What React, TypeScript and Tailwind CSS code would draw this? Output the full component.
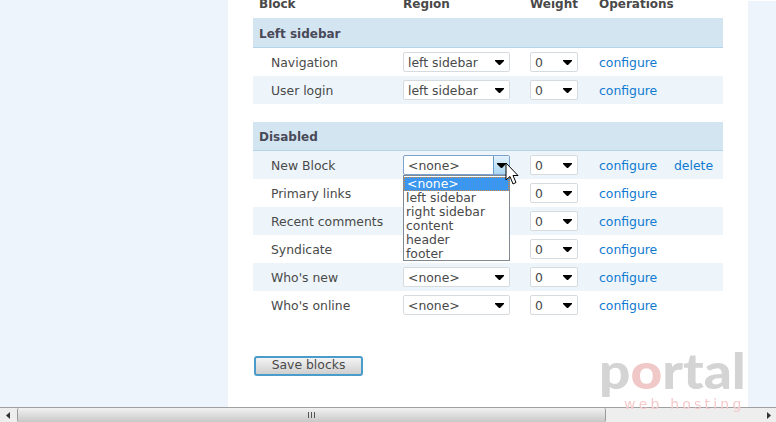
import React from "react";

const font = { fontFamily: '"DejaVu Sans", Verdana, sans-serif' };

function Arrow({ className = "" }: { className?: string }) {
  return (
    <svg width="9" height="5" viewBox="0 0 9 5" className={className}>
      <path d="M0 0H9V1L5 5H4L0 1Z" fill="#000" />
    </svg>
  );
}

function Select({ value, w, active }: { value: string; w: string; active?: boolean }) {
  return (
    <div
      className={`${w} h-[20px] relative flex items-center justify-between rounded-[2px] bg-white border pl-[4px] pr-[5px] text-[12.4px] text-[#494949] ${
        active ? "border-[#7da2ce]" : "border-[#d6dbe0]"
      }`}
    >
      <span className="leading-none pt-[2px]">{value}</span>
      {active ? (
        <span className="absolute right-0 top-0 h-[18px] w-[16px] flex items-center justify-center border-l border-[#6a9cc9] bg-gradient-to-b from-[#e3f1fb] to-[#a9d6f3]">
          <Arrow />
        </span>
      ) : (
        <Arrow />
      )}
    </div>
  );
}

function Row({
  name,
  region,
  alt,
  del,
  active,
}: {
  name: string;
  region: string;
  alt?: boolean;
  del?: boolean;
  active?: boolean;
}) {
  return (
    <div className={`h-[28px] flex items-center text-[12.4px] ${alt ? "bg-[#edf5fb]" : "bg-white"}`}>
      <div className="w-[150px] pl-[18px] pt-[2px] text-[#494949]">{name}</div>
      <Select value={region} w="w-[107px]" active={active} />
      <div className="w-[20px]" />
      <Select value="0" w="w-[48px]" />
      <div className="w-[21px]" />
      <a className="w-[75px] pt-[2px] text-[#0f7ad0]">configure</a>
      {del && <a className="pt-[2px] text-[#0f7ad0]">delete</a>}
    </div>
  );
}

function Section({ title, h }: { title: string; h: string }) {
  return (
    <div className={`${h} flex items-center pl-[6px] pt-[2px] bg-[#d4e5f2] border-b border-[#b5d3e9] text-[12px] font-bold text-[#494958]`}>
      {title}
    </div>
  );
}

export default function App() {
  return (
    <div className="w-[776px] h-[422px] flex flex-col overflow-hidden bg-white" style={font}>
      <div className="flex-1 flex min-h-0">
        <div className="w-[228px] bg-[#edf4fb]" />
        <div className="w-[520px] px-[25px] relative">
          <div className="h-[18px] flex items-end text-[12px] font-bold text-[#494949] leading-none overflow-hidden">
            <div className="w-[150px] pl-[6px] relative top-[-8px]">Block</div>
            <div className="w-[127px] relative top-[-8px]">Region</div>
            <div className="w-[69px] relative top-[-8px]">Weight</div>
            <div className="relative top-[-8px]">Operations</div>
          </div>
          <Section title="Left sidebar" h="h-[30px]" />
          <Row name="Navigation" region="left sidebar" />
          <Row name="User login" region="left sidebar" alt />
          <div className="h-[18px]" />
          <Section title="Disabled" h="h-[29px]" />
          <Row name="New Block" region="<none>" alt del active />
          <Row name="Primary links" region="<none>" />
          <Row name="Recent comments" region="<none>" alt />
          <Row name="Syndicate" region="<none>" />
          <Row name="Who's new" region="<none>" alt />
          <Row name="Who's online" region="<none>" />
          <button className="mt-[37px] ml-px w-[109px] h-[20px] pb-[2px] rounded-[3px] border-2 border-[#4a9ccb] bg-gradient-to-b from-[#f4f4f4] to-[#cfcfcf] text-[12.4px] leading-none text-[#494949]">
            Save blocks
          </button>

          {/* open dropdown list */}
          <div className="absolute left-[175px] top-[175px] w-[107px] h-[86px] bg-white border border-[#7f8a94] text-[12.4px] leading-[14px] text-[#494949] pl-[2px] pt-px z-10">
            <div className="-ml-[2px] pl-[3px] h-[14px] bg-[#3a96ee] text-white outline-1 -outline-offset-1 outline-dotted outline-[#d08a44]">
              {"<none>"}
            </div>
            <div>left sidebar</div>
            <div>right sidebar</div>
            <div>content</div>
            <div>header</div>
            <div>footer</div>
          </div>

          {/* cursor */}
          <svg width="16" height="24" viewBox="0 0 16 24" className="absolute left-[277px] top-[162px] z-20">
            <path d="M1 1V18L5 14.5L8 22L11 20.5L8 13.5H13Z" fill="#fff" stroke="#000" strokeWidth="1" />
          </svg>

          {/* logo */}
          <div className="absolute left-[371px] top-[347px] w-[150px] h-[64px] leading-none select-none z-0 blur-[0.5px]">
            <div className="text-[50px] font-black text-[#d4d4d4] h-[46px] leading-[46px] scale-x-[1.1] origin-left" style={{ fontFamily: 'Lato, sans-serif' }}>
              p<span className="text-[#f0c8c8]">o</span>rtal
            </div>
            <div className="text-[14px] text-[#f6caca] tracking-[3.2px] pl-[25px] mt-[4px]">web hosting</div>
          </div>
        </div>
        <div className="flex-1 bg-[#edf4fb] mt-px" />
      </div>

      {/* horizontal scrollbar */}
      <div className="h-[15px] flex items-center bg-[#eeeeee] border-t border-[#a0a0a0]">
        <div className="w-[17px] flex items-center justify-center pr-px">
          <svg width="4" height="7" viewBox="0 0 4 7"><path d="M4 0V7L0 3.5Z" fill="#333" /></svg>
        </div>
        <div className="w-[589px] h-[14px] flex items-center justify-center rounded-[2px] border-x border-[#9a9a9a] bg-gradient-to-b from-[#f2f2f2] to-[#c8c8c8] leading-none">
          <svg width="7" height="6" viewBox="0 0 7 6"><path d="M0.5 0V6M3.5 0V6M6.5 0V6" stroke="#555" /></svg>
        </div>
        <div className="flex-1 flex items-center justify-end pr-[5px]">
          <svg width="4" height="7" viewBox="0 0 4 7"><path d="M0 0V7L4 3.5Z" fill="#333" /></svg>
        </div>
      </div>
    </div>
  );
}
